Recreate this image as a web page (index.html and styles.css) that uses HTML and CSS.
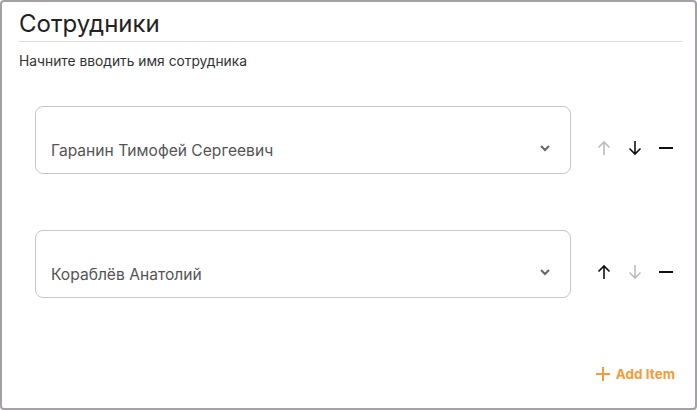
FILE: index.html
```html
<!DOCTYPE html>
<html lang="ru">
<head>
<meta charset="utf-8">
<link rel="stylesheet" href="styles.css">
</head>
<body>
<div class="panel">
  <h1 class="title">Сотрудники</h1>
  <p class="hint">Начните вводить имя сотрудника</p>
  <div class="list">
    <div class="row">
      <div class="select">
        <span class="value">Гаранин Тимофей Сергеевич</span>
        <svg class="chev" width="12" height="8" viewBox="0 0 12 8"><path d="M2 2l4 4 4-4" fill="none" stroke="#666" stroke-width="2"/></svg>
      </div>
      <div class="actions">
        <span class="act disabled"><svg width="16" height="16" viewBox="0 0 16 16"><path d="M8 15V2M2.5 7.5L8 2l5.5 5.5" fill="none" stroke="currentColor" stroke-width="1.6"/></svg></span>
        <span class="act"><svg width="16" height="16" viewBox="0 0 16 16"><path d="M8 1v13M2.5 8.5L8 14l5.5-5.5" fill="none" stroke="currentColor" stroke-width="1.6"/></svg></span>
        <span class="act"><svg width="16" height="16" viewBox="0 0 16 16"><path d="M1 8h14" fill="none" stroke="currentColor" stroke-width="2"/></svg></span>
      </div>
    </div>
    <div class="row">
      <div class="select">
        <span class="value">Кораблёв Анатолий</span>
        <svg class="chev" width="12" height="8" viewBox="0 0 12 8"><path d="M2 2l4 4 4-4" fill="none" stroke="#666" stroke-width="2"/></svg>
      </div>
      <div class="actions">
        <span class="act"><svg width="16" height="16" viewBox="0 0 16 16"><path d="M8 15V2M2.5 7.5L8 2l5.5 5.5" fill="none" stroke="currentColor" stroke-width="1.6"/></svg></span>
        <span class="act disabled"><svg width="16" height="16" viewBox="0 0 16 16"><path d="M8 1v13M2.5 8.5L8 14l5.5-5.5" fill="none" stroke="currentColor" stroke-width="1.6"/></svg></span>
        <span class="act"><svg width="16" height="16" viewBox="0 0 16 16"><path d="M1 8h14" fill="none" stroke="currentColor" stroke-width="2"/></svg></span>
      </div>
    </div>
  </div>
  <div class="footer">
    <span class="add"><svg width="14" height="14" viewBox="0 0 14 14"><path d="M7 0v14M0 7h14" fill="none" stroke="currentColor" stroke-width="2"/></svg>Add Item</span>
  </div>
</div>
</body>
</html>
```
FILE: styles.css
```css
html, body {
  margin: 0;
  padding: 0;
  background: #fff;
}
body {
  font-family: Inter, "Noto Sans", sans-serif;
  color: #222;
}
.panel {
  box-sizing: border-box;
  width: 697px;
  height: 410px;
  border: 2px solid #a3a1a3;
  border-radius: 4px;
  padding: 0 13px 0 17px;
  display: flex;
  flex-direction: column;
}
.title {
  margin: 0;
  padding: 7px 0 2px;
  font-size: 24px;
  font-weight: 400;
  line-height: 30px;
  color: #222;
  border-bottom: 1px solid #ddd;
}
.hint {
  margin: 10px 0 0;
  font-size: 13.8px;
  line-height: 18px;
  color: #333;
}
.list {
  margin-top: 20px;
  display: flex;
  flex-direction: column;
  gap: 24px;
}
.row {
  display: flex;
  align-items: flex-start;
  padding: 16px 0 16px 16px;
  height: 68px;
}
.select {
  box-sizing: border-box;
  width: 536px;
  height: 68px;
  border: 1px solid #c6c6c6;
  border-radius: 8px;
  padding: 22px 19px 0 15px;
  display: flex;
  align-items: center;
  justify-content: space-between;
}
.value {
  font-size: 15.6px;
  line-height: 20px;
  color: #555;
}
.chev {
  margin-top: -6px;
}
.actions {
  display: flex;
  margin-left: 17px;
  padding-top: 34px;
}
.act {
  width: 31px;
  height: 16px;
  display: flex;
  justify-content: center;
  color: #111;
}
.act.disabled {
  color: #bdbdbd;
}
.footer {
  display: flex;
  justify-content: flex-end;
  margin-top: 48px;
  padding-right: 7px;
}
.add {
  display: flex;
  align-items: center;
  gap: 6px;
  color: #f79a38;
  font-size: 13.5px;
  font-weight: 700;
  line-height: 24px;
}
```
